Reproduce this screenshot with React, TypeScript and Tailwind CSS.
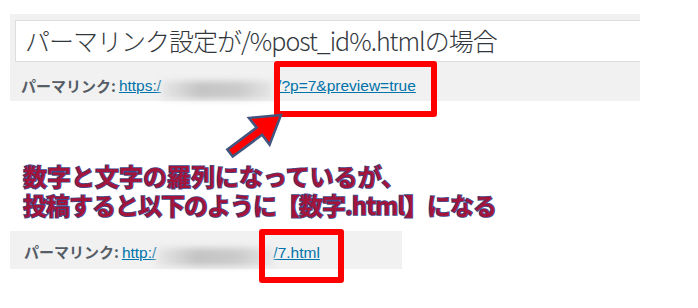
import React from "react";

export default function App() {
  return (
    <div className="relative w-[698px] h-[308px] bg-white overflow-hidden">
      {/* top panel */}
      <div className="pt-[14px] pl-[10px]">
        <div className="w-[630px] h-[87px] bg-[#f1f1f1] pt-[6px] pl-[5px]">
          <div className="h-[42px] bg-white border border-r-0 border-[#dddddd] flex items-center pl-[9px] text-[25px] font-light tracking-[-1px] text-[#32373c] whitespace-nowrap font-['Noto_Sans_CJK_JP','Noto_Sans',sans-serif]">
            パーマリンク設定が/%post_id%.htmlの場合
          </div>
          <div className="flex items-center h-[39px] pt-[9px] pl-[6px] whitespace-nowrap">
            <span className="text-[15px] font-semibold text-[#555d66] font-['Noto_Sans_CJK_JP','Noto_Sans',sans-serif]">
              パーマリンク:
            </span>
            <span className="ml-[3px] text-[15.5px] text-[#0073aa] underline font-['Liberation_Sans',sans-serif]">
              https:/
            </span>
            <span className="relative top-[4px] inline-block w-[112px] h-[18px] bg-[linear-gradient(90deg,#e8e8e8_0%,#c4c4c4_35%,#cbcbcb_70%,#e6e6e6_100%)] blur-[3px]" />
            <span className="ml-[4px] text-[15.5px] text-[#0073aa] underline font-['Liberation_Sans',sans-serif]">
              /?p=7&amp;preview=true
            </span>
          </div>
        </div>
      </div>

      {/* annotation text */}
      <div className="mt-[60px] pl-[23px] text-[24px] leading-[29px] font-bold text-[#a3143b] whitespace-nowrap [-webkit-text-stroke:1.6px_#3a4a8c] [paint-order:stroke_fill] font-['Noto_Sans_CJK_JP','Noto_Sans',sans-serif]">
        <div>数字と文字の羅列になっているが、</div>
        <div className="tracking-[-1px]">投稿すると以下のように【数字.html】になる</div>
      </div>

      {/* bottom panel */}
      <div className="mt-[12px] ml-[10px] w-[392px] h-[38px] bg-[#f1f1f1] flex items-center pl-[14px] pt-[5px] whitespace-nowrap">
        <span className="text-[15px] font-semibold text-[#555d66] font-['Noto_Sans_CJK_JP','Noto_Sans',sans-serif]">
          パーマリンク:
        </span>
        <span className="ml-[3px] text-[15.5px] text-[#0073aa] underline font-['Liberation_Sans',sans-serif]">
          http:/
        </span>
        <span className="relative top-[4px] inline-block w-[117px] h-[18px] bg-[linear-gradient(90deg,#e8e8e8_0%,#c4c4c4_35%,#cbcbcb_70%,#e6e6e6_100%)] blur-[3px]" />
        <span className="text-[15.5px] text-[#0073aa] underline font-['Liberation_Sans',sans-serif]">
          /7.html
        </span>
      </div>

      {/* overlays: red boxes */}
      <div className="absolute left-[274px] top-[61px] w-[163px] h-[56px] border-[6px] border-[#ff0000] rounded-[3px]" />
      <div className="absolute left-[259px] top-[229px] w-[85px] h-[54px] border-[6px] border-[#ff0000] rounded-[3px]" />

      {/* arrow */}
      <svg className="absolute left-0 top-0" width="698" height="308" viewBox="0 0 698 308">
        <polygon
          points="281,115 249,118 256.7,127.6 227.3,149.4 232.7,156.6 262.1,134.8 269.6,144.8"
          fill="#ff0000"
          stroke="#40557f"
          strokeWidth="2.5"
          strokeLinejoin="miter"
        />
      </svg>
    </div>
  );
}
